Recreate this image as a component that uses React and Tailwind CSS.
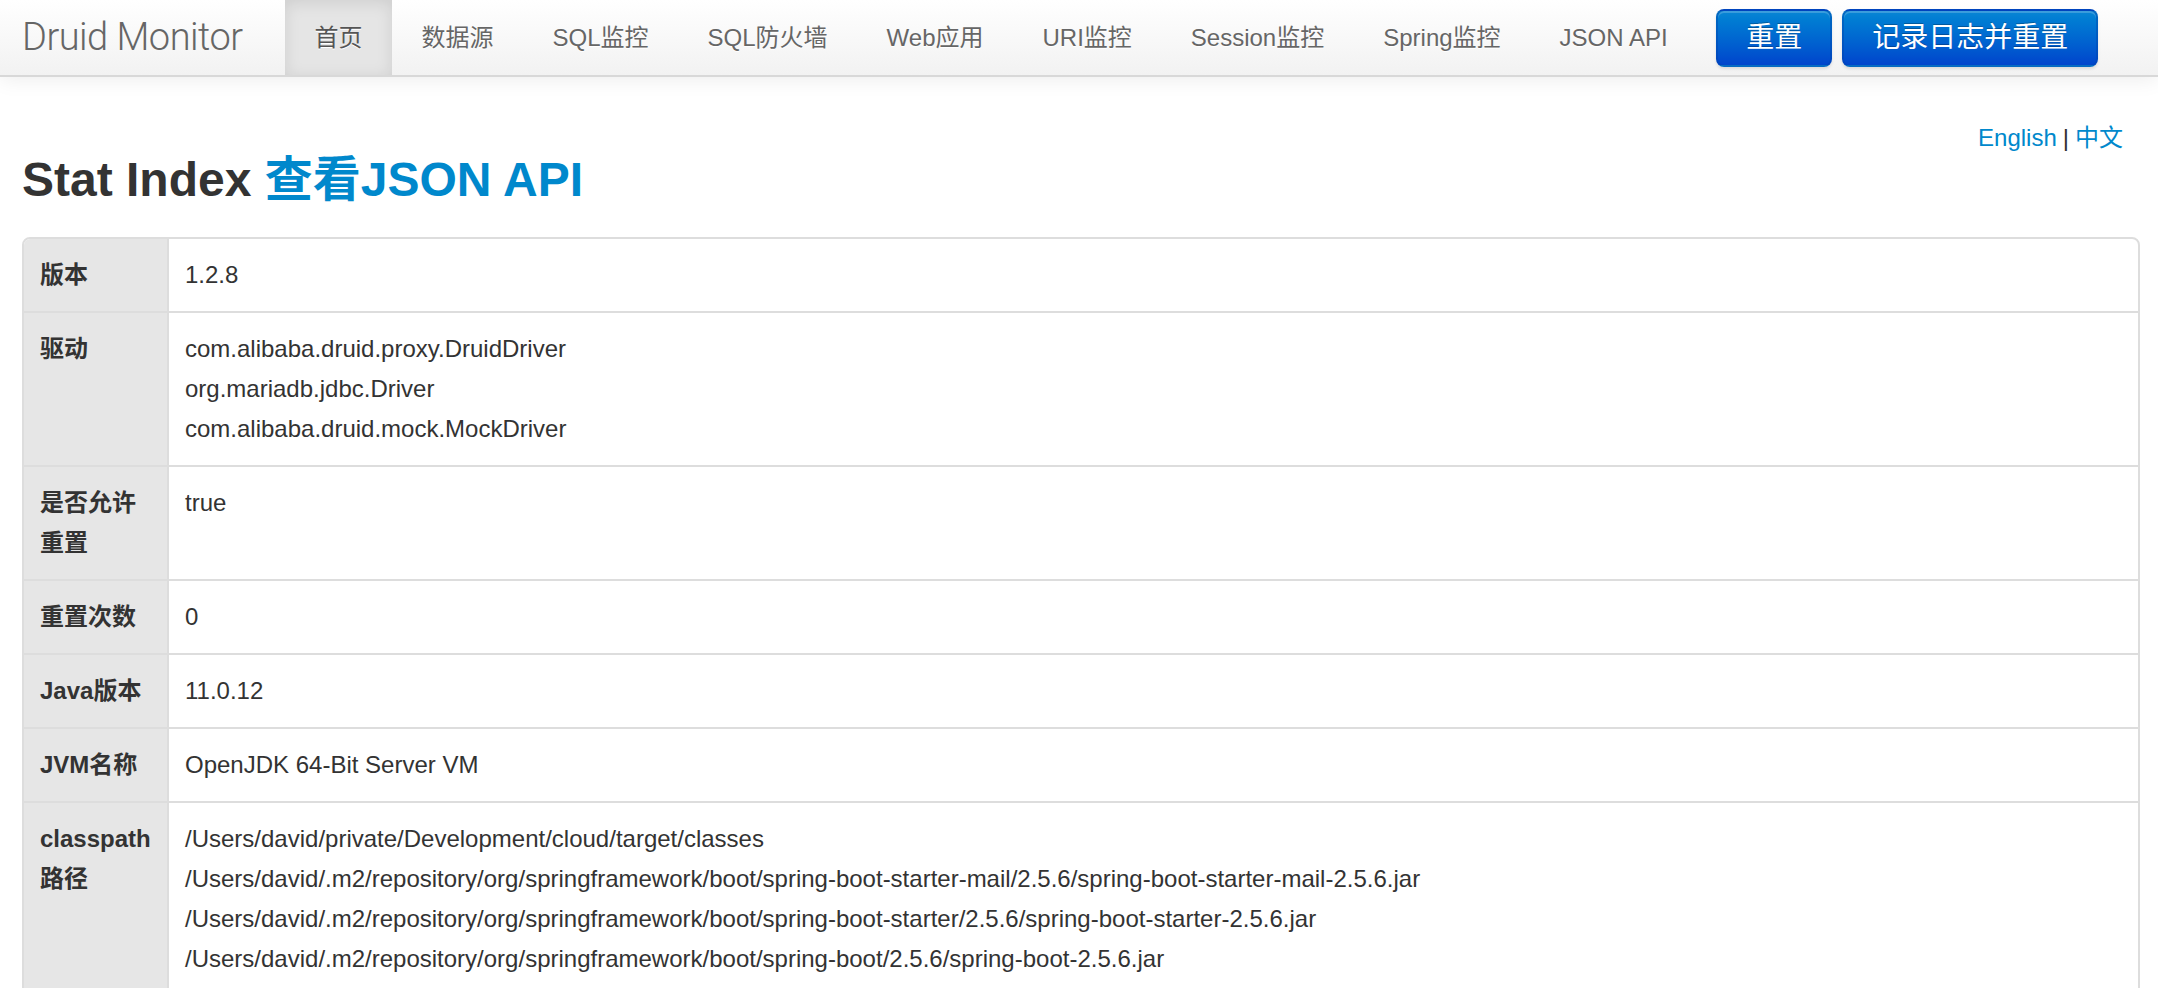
import React from "react";

const FONT = { fontFamily: '"Liberation Sans", "Noto Sans CJK SC", Arial, sans-serif' };

const navItems = ["首页", "数据源", "SQL监控", "SQL防火墙", "Web应用", "URI监控", "Session监控", "Spring监控", "JSON API"];

const rows = [
  { label: "版本", values: ["1.2.8"] },
  {
    label: "驱动",
    values: [
      "com.alibaba.druid.proxy.DruidDriver",
      "org.mariadb.jdbc.Driver",
      "com.alibaba.druid.mock.MockDriver",
    ],
  },
  { label: "是否允许重置", values: ["true"] },
  { label: "重置次数", values: ["0"] },
  { label: "Java版本", values: ["11.0.12"] },
  { label: "JVM名称", values: ["OpenJDK 64-Bit Server VM"] },
  {
    label: "classpath路径",
    values: [
      "/Users/david/private/Development/cloud/target/classes",
      "/Users/david/.m2/repository/org/springframework/boot/spring-boot-starter-mail/2.5.6/spring-boot-starter-mail-2.5.6.jar",
      "/Users/david/.m2/repository/org/springframework/boot/spring-boot-starter/2.5.6/spring-boot-starter-2.5.6.jar",
      "/Users/david/.m2/repository/org/springframework/boot/spring-boot/2.5.6/spring-boot-2.5.6.jar",
    ],
  },
];

function Btn({ children }) {
  return (
    <button className="h-[58px] px-[28px] rounded-[8px] border-2 border-[#0044aa]/40 bg-gradient-to-b from-[#0a86d4] to-[#0044cc] text-white text-[28px] leading-none shadow-[inset_0_2px_0_rgba(255,255,255,0.2),0_2px_3px_rgba(0,0,0,0.1)] [text-shadow:0_-1px_0_rgba(0,0,0,0.25)]">
      {children}
    </button>
  );
}

export default function App() {
  return (
    <div className="min-h-[988px] bg-white text-[#333]" style={FONT}>
      {/* Navbar */}
      <div className="h-[77px] flex items-stretch bg-gradient-to-b from-white to-[#f2f2f2] border-b-2 border-[#d8d8d8] shadow-[0_2px_20px_rgba(0,0,0,0.08)] relative z-10">
        <div
          className="w-[285px] pl-[22px] flex items-center text-[38px] text-[#666] tracking-[-0.5px]"
          style={{ fontFamily: 'Roboto, "Liberation Sans", sans-serif', fontWeight: 300 }}
        >
          Druid Monitor
        </div>
        <div className="flex items-stretch">
          {navItems.map((t, i) => (
            <div
              key={t}
              className={
                "px-[29.5px] flex items-center text-[24px] [text-shadow:0_1px_0_#fff] " +
                (i === 0 ? "bg-[#e5e5e5] shadow-[inset_0_3px_16px_rgba(0,0,0,0.1)] text-[#555]" : "text-[#666]")
              }
            >
              {t}
            </div>
          ))}
        </div>
        <div className="flex items-center gap-[10px] ml-[19px]">
          <Btn>重置</Btn>
          <Btn>记录日志并重置</Btn>
        </div>
      </div>

      {/* Content */}
      <div className="pl-[22px] pr-[18px]">
        <div className="mt-[43px] h-[36px] flex justify-end pr-[17px] text-[24px] leading-[36px]">
          <span className="text-[#0088cc]">English</span>
          <span className="mx-[6px] text-[#333]">|</span>
          <span className="text-[#0088cc]">中文</span>
        </div>
        <h1 className="text-[48px] leading-[48px] font-bold text-[#333] mb-[33px]">
          Stat Index <span className="text-[#0088cc]">查看JSON API</span>
        </h1>

        <div className="border-2 border-[#ddd] rounded-[8px] overflow-hidden text-[24px] leading-[40px]">
          {rows.map((r, i) => (
            <div key={r.label} className={"flex " + (i > 0 ? "border-t-2 border-[#ddd]" : "")}>
              <div className="w-[143px] shrink-0 bg-[#e6e6e6] px-[16px] py-[16px] font-bold text-[#333] break-all">
                {r.label}
              </div>
              <div className="flex-1 border-l-2 border-[#ddd] px-[16px] py-[16px] text-[#333]">
                {r.values.map((v) => (
                  <div key={v} className="whitespace-nowrap">{v}</div>
                ))}
              </div>
            </div>
          ))}
        </div>
      </div>
    </div>
  );
}
